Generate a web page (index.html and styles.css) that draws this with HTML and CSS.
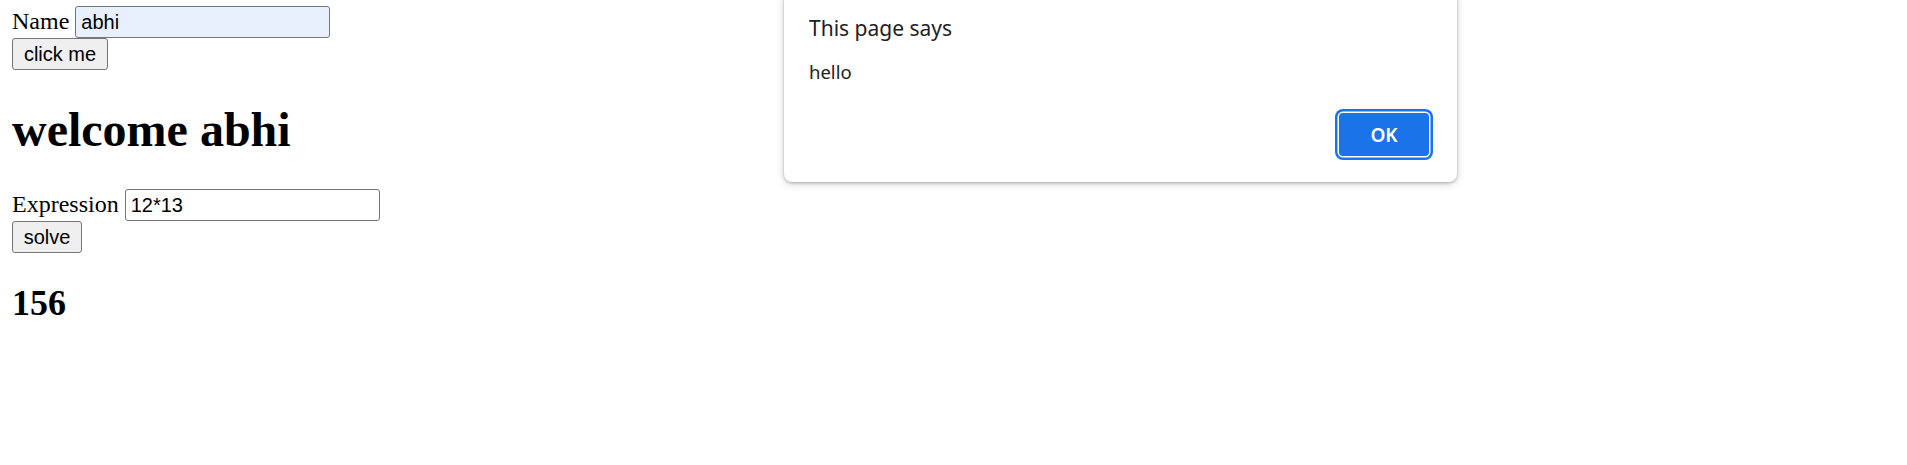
FILE: index.html
```html
<!DOCTYPE html>
<html>
<head>
<meta charset="utf-8">
<link rel="stylesheet" href="styles.css">
</head>
<body>
<div class="page">
  <div class="field-row">
    <label class="label">Name</label>
    <input class="text-input autofilled" type="text" value="abhi">
  </div>
  <button class="btn btn-click">click me</button>
  <h1 class="greeting">welcome abhi</h1>
  <div class="field-row">
    <label class="label">Expression</label>
    <input class="text-input" type="text" value="12*13">
  </div>
  <button class="btn btn-solve">solve</button>
  <h2 class="result">156</h2>
</div>
<div class="dialog">
  <div class="dialog-title">This page says</div>
  <div class="dialog-message">hello</div>
  <div class="dialog-footer">
    <button class="ok-btn">OK</button>
  </div>
</div>
</body>
</html>
```
FILE: styles.css
```css
html, body {
  margin: 0;
  padding: 0;
  background: #fff;
}
body {
  font-family: "Liberation Serif", "Times New Roman", serif;
  font-size: 24px;
  color: #000;
  position: relative;
  height: 465px;
  overflow: hidden;
}
.page {
  padding: 6px 12px 0 12px;
}
.field-row {
  display: flex;
  align-items: baseline;
  gap: 6px;
}
.label {
  line-height: 28px;
}
.text-input {
  box-sizing: border-box;
  width: 255px;
  height: 32px;
  margin: 0;
  padding: 0 5px;
  border: 1.5px solid #767676;
  border-radius: 3px;
  font-family: "Liberation Sans", Arial, sans-serif;
  font-size: 20px;
  color: #000;
  background: #fff;
  outline: none;
}
.text-input.autofilled {
  background: #e8f0fe;
}
.btn {
  display: block;
  box-sizing: border-box;
  height: 32px;
  margin: 0;
  padding: 0;
  border: 1.5px solid #767676;
  border-radius: 3px;
  background: #efefef;
  font-family: "Liberation Sans", Arial, sans-serif;
  font-size: 20px;
  color: #000;
  text-align: center;
}
.btn-click {
  width: 96px;
}
.btn-solve {
  width: 70px;
}
.greeting {
  font-size: 48px;
  font-weight: bold;
  margin: 32px 0;
  line-height: 55px;
}
.result {
  font-size: 36px;
  font-weight: bold;
  margin: 30px 0;
  line-height: 41px;
}
.dialog {
  position: absolute;
  left: 784px;
  top: -8px;
  width: 673px;
  height: 190px;
  box-sizing: border-box;
  padding: 21px 24px 26px 25px;
  background: #fff;
  border-radius: 8px;
  box-shadow: 0 1px 3px rgba(60, 64, 67, 0.35), 0 2px 8px rgba(60, 64, 67, 0.2);
  display: flex;
  flex-direction: column;
  font-family: "Noto Sans", "Open Sans", sans-serif;
  color: #202124;
}
.dialog-title {
  font-size: 21px;
  line-height: 30px;
}
.dialog-message {
  margin-top: 16px;
  font-size: 18.5px;
  line-height: 26px;
}
.dialog-footer {
  margin-top: auto;
  display: flex;
  justify-content: flex-end;
  padding-right: 4px;
}
.ok-btn {
  width: 90px;
  height: 43px;
  margin: 0;
  padding: 0;
  border: none;
  border-radius: 4px;
  background: #1a73e8;
  color: #fff;
  font-family: "Noto Sans", "Open Sans", sans-serif;
  font-size: 19px;
  font-weight: 600;
  box-shadow: 0 0 0 1.5px #fff, 0 0 0 4px #1a73e8;
}
```
